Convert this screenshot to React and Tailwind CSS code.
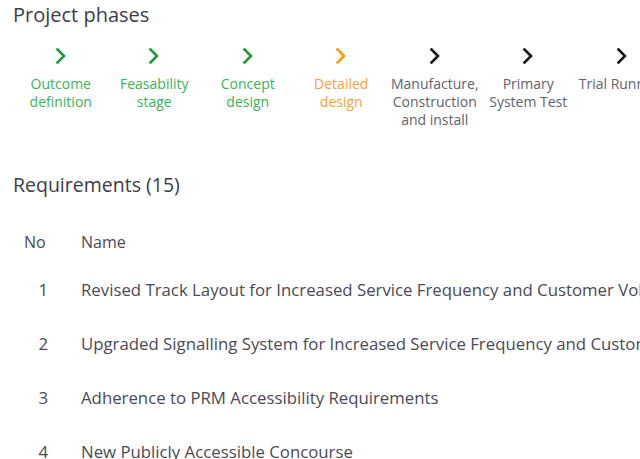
import React from "react";

const phases = [
  { label: ["Outcome", "definition"], state: "done" },
  { label: ["Feasability", "stage"], state: "done" },
  { label: ["Concept", "design"], state: "done" },
  { label: ["Detailed", "design"], state: "current" },
  { label: ["Manufacture,", "Construction", "and install"], state: "todo" },
  { label: ["Primary", "System Test"], state: "todo" },
  { label: ["Trial Running"], state: "todo" },
];

const rows = [
  "Revised Track Layout for Increased Service Frequency and Customer Volume",
  "Upgraded Signalling System for Increased Service Frequency and Customer Volume",
  "Adherence to PRM Accessibility Requirements",
  "New Publicly Accessible Concourse",
];

function Chevron({ color }) {
  return (
    <svg width="12" height="16" viewBox="0 0 12 16" className={color}>
      <path d="M2.5 1.5 L9 8 L2.5 14.5" fill="none" stroke="currentColor" strokeWidth="2.6" strokeLinecap="square" />
    </svg>
  );
}

export default function App() {
  return (
    <div className="w-[640px] h-[459px] overflow-hidden bg-white font-['Open_Sans',sans-serif]">
      <div className="pl-[13px] pt-[1px] text-[20px] leading-[28px] text-[#3c3c4a]">Project phases</div>
      <div className="flex pl-[14px] pt-[19px] whitespace-nowrap">
        {phases.map((p, i) => {
          const iconColor = p.state === "done" ? "text-[#1c9b3c]" : p.state === "current" ? "text-[#ff9a0a]" : "text-[#151515]";
          const textColor = p.state === "done" ? "text-[#3ab356]" : p.state === "current" ? "text-[#f5a33a]" : "text-[#62626e]";
          return (
            <div key={i} className="w-[93.5px] shrink-0 flex flex-col items-center">
              <Chevron color={iconColor} />
              <div className={`mt-[11px] text-[14px] leading-[18px] text-center ${textColor}`}>
                {p.label.map((l, j) => (
                  <div key={j}>{l}</div>
                ))}
              </div>
            </div>
          );
        })}
      </div>
      <div className="pl-[13px] pt-[43px] text-[19.5px] leading-[26px] text-[#3c3c4a]">Requirements (15)</div>
      <div className="pt-[23px] text-[16.8px] text-[#4a4a56] whitespace-nowrap">
        <div className="flex h-[42px] items-center text-[16px]">
          <div className="w-[81px] shrink-0 pl-[24px]">No</div>
          <div>Name</div>
        </div>
        {rows.map((r, i) => (
          <div key={i} className="flex h-[54px] items-center">
            <div className="w-[81px] shrink-0 pr-[33px] text-right">{i + 1}</div>
            <div className="min-w-0">{r}</div>
          </div>
        ))}
      </div>
    </div>
  );
}
